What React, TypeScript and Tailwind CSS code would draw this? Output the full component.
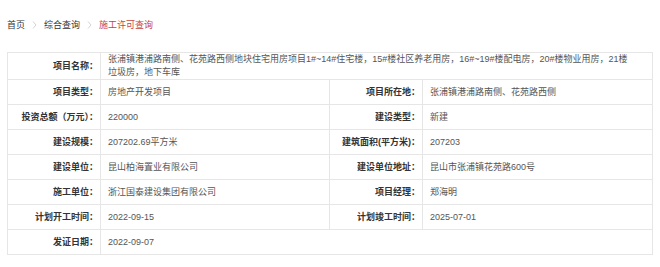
import { Fragment } from "react";

type Cell = { label: string; value: string };

// each row: left pair, right pair (or null when the value spans the rest)
const rows: [Cell, Cell | null][] = [
  [{ label: "项目类型：", value: "房地产开发项目" }, { label: "项目所在地：", value: "张浦镇港浦路南侧、花苑路西侧" }],
  [{ label: "投资总额（万元）：", value: "220000" }, { label: "建设类型：", value: "新建" }],
  [{ label: "建设规模：", value: "207202.69平方米" }, { label: "建筑面积(平方米)：", value: "207203" }],
  [{ label: "建设单位：", value: "昆山柏海置业有限公司" }, { label: "建设单位地址：", value: "昆山市张浦镇花苑路600号" }],
  [{ label: "施工单位：", value: "浙江国泰建设集团有限公司" }, { label: "项目经理：", value: "郑海明" }],
  [{ label: "计划开工时间：", value: "2022-09-15" }, { label: "计划竣工时间：", value: "2025-07-01" }],
  [{ label: "发证日期：", value: "2022-09-07" }, null],
];

const labelCls = "p-0 border border-[#e6e6e6] text-right pr-[2px] font-bold text-[#333] whitespace-nowrap";
const valueCls = "p-0 border border-[#e6e6e6] pl-[7px] text-[#555] whitespace-nowrap";

const Chevron = () => (
  <svg width="5" height="8" viewBox="0 0 5 8" className="shrink-0">
    <path d="M1 0.5 L4 4 L1 7.5" fill="none" stroke="#d4d4d4" strokeWidth="1" />
  </svg>
);

export default function App() {
  return (
    <div className="w-[660px] h-[267px] bg-white overflow-hidden font-['Liberation_Sans','Noto_Sans_CJK_SC',sans-serif] text-[9px] leading-[13px]">
      {/* breadcrumb */}
      <div className="flex items-center gap-[7px] pl-[7px] pt-[18px] h-[32px]">
        <span className="text-[#333]">首页</span>
        <Chevron />
        <span className="text-[#333]">综合查询</span>
        <Chevron />
        <span className="text-[#c9423b]">施工许可查询</span>
      </div>

      <table className="ml-[7px] mt-[20px] w-[645px] table-fixed border-collapse border border-[#e3e3e3]">
        <colgroup>
          <col className="w-[93px]" />
          <col className="w-[229px]" />
          <col className="w-[93px]" />
          <col className="w-[230px]" />
        </colgroup>
        <tbody>
          <tr className="h-[27px]">
            <td className={labelCls}>项目名称：</td>
            <td colSpan={3} className="p-0 border border-[#e6e6e6] pl-[7px] text-[#555] leading-[13px]">
              <div className="whitespace-nowrap">
                张浦镇港浦路南侧、花苑路西侧地块住宅用房项目1#~14#住宅楼，15#楼社区养老用房，16#~19#楼配电房，20#楼物业用房，21楼
              </div>
              <div className="whitespace-nowrap">垃圾房，地下车库</div>
            </td>
          </tr>
          {rows.map(([l, r], i) => (
            <tr key={i} className="h-[25px]">
              <td className={labelCls}>{l.label}</td>
              {r ? (
                <Fragment>
                  <td className={valueCls}>{l.value}</td>
                  <td className={labelCls}>{r.label}</td>
                  <td className={valueCls}>{r.value}</td>
                </Fragment>
              ) : (
                <td colSpan={3} className={valueCls}>
                  {l.value}
                </td>
              )}
            </tr>
          ))}
        </tbody>
      </table>
    </div>
  );
}
